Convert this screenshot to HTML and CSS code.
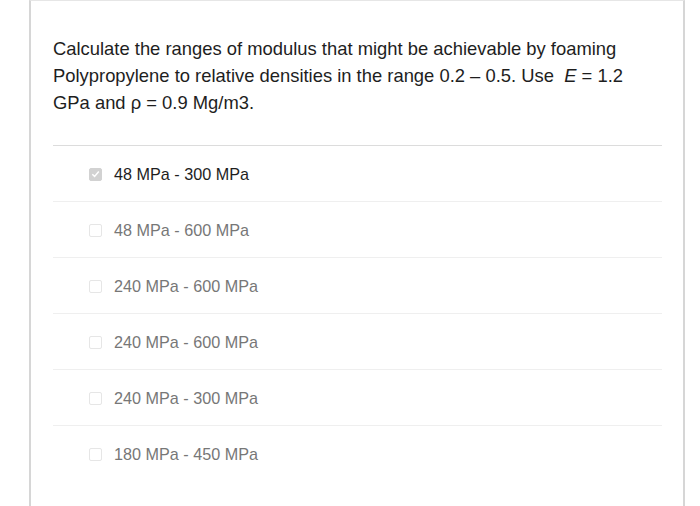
FILE: index.html
```html
<!DOCTYPE html>
<html>
<head>
<meta charset="utf-8">
<link rel="stylesheet" href="styles.css">
</head>
<body>
<div class="card">
  <div class="question">
    <p class="question-text">Calculate the ranges of modulus that might be achievable by foaming Polypropylene to relative densities in the range 0.2 – 0.5. Use&nbsp; <i>E</i> = 1.2 GPa and ρ = 0.9 Mg/m3.</p>
  </div>
  <ul class="options">
    <li class="option selected"><span class="box checked"><svg viewBox="0 0 12 12" width="12" height="12"><path d="M2.5 6.2 L5 8.6 L9.6 3.2" fill="none" stroke="#fff" stroke-width="1.6"/></svg></span><span class="label">48 MPa - 300 MPa</span></li>
    <li class="option"><span class="box"></span><span class="label">48 MPa - 600 MPa</span></li>
    <li class="option"><span class="box"></span><span class="label">240 MPa - 600 MPa</span></li>
    <li class="option"><span class="box"></span><span class="label">240 MPa - 600 MPa</span></li>
    <li class="option"><span class="box"></span><span class="label">240 MPa - 300 MPa</span></li>
    <li class="option last"><span class="box"></span><span class="label">180 MPa - 450 MPa</span></li>
  </ul>
</div>
</body>
</html>
```
FILE: styles.css
```css
html, body {
  margin: 0;
  padding: 0;
  background: #fff;
}
body {
  font-family: "Liberation Sans", Arial, sans-serif;
  height: 506px;
  overflow: hidden;
}
.card {
  margin-left: 29px;
  border: 2px solid #d6d6d6;
  border-top: 1px solid #e6e6e6;
  border-bottom: none;
  padding: 34px 21px 60px 22px;
  min-height: 600px;
  width: 609px;
}
.question {
  padding-bottom: 29px;
  border-bottom: 1px solid #dcdcdc;
}
.question-text {
  margin: 0;
  max-width: 590px;
  font-size: 18.4px;
  line-height: 27px;
  color: #1e1e1e;
}
.options {
  list-style: none;
  margin: 0;
  padding: 0;
}
.option {
  display: flex;
  align-items: center;
  height: 55px;
  border-bottom: 1px solid #efefef;
  padding-left: 36px;
  padding-top: 1px;
  box-sizing: border-box;
  height: 56px;
  font-size: 16.2px;
  color: #777;
}
.option.last {
  border-bottom: none;
}
.option.selected {
  color: #1e1e1e;
}
.box {
  width: 11px;
  height: 11px;
  border: 1px solid #e6e6e6;
  border-radius: 2px;
  margin-right: 12px;
  display: flex;
  align-items: center;
  justify-content: center;
  background: #fff;
}
.box.checked {
  background: #d2d2d2;
  border-color: #d2d2d2;
}
.box svg {
  display: block;
}
```
